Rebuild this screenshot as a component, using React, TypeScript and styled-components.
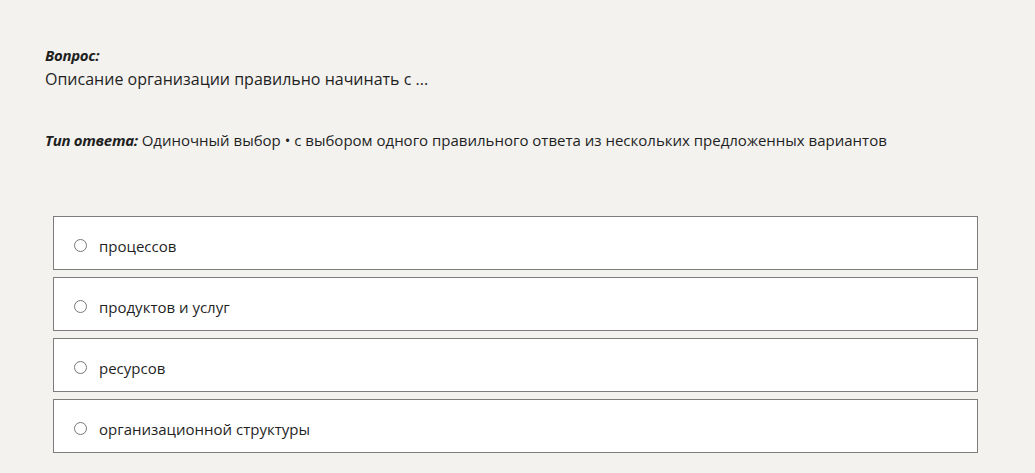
import React from "react";
import styled, { createGlobalStyle } from "styled-components";

const Global = createGlobalStyle`
  html, body { margin: 0; padding: 0; background: #f3f2ef; }
  body { font-family: "Open Sans", "Noto Sans", sans-serif; color: #1f1f1f; }
`;

const Page = styled.div`
  padding: 45px 57px 0 45px;
  display: flex;
  flex-direction: column;
`;

const Label = styled.div`
  font-weight: 700;
  font-style: italic;
  font-size: 15px;
  line-height: 20px;
  letter-spacing: -0.3px;
`;

const Question = styled.div`
  font-size: 16px;
  line-height: 21px;
  margin-top: 4px;
`;

const TypeLine = styled.div`
  margin-top: 40px;
  font-size: 15px;
  line-height: 20px;
`;

const TypeLabel = styled.span`
  font-weight: 700;
  font-style: italic;
  letter-spacing: -0.3px;
`;

const Options = styled.div`
  margin-top: 66px;
  margin-left: 8px;
  display: flex;
  flex-direction: column;
  gap: 7px;
`;

const Option = styled.label`
  display: flex;
  align-items: center;
  height: 54px;
  box-sizing: border-box;
  border: 1px solid #7d7d7d;
  background: #ffffff;
  padding: 5px 0 0 20px;
  font-size: 15px;
  cursor: pointer;
`;

const Radio = styled.span`
  width: 13px;
  height: 13px;
  box-sizing: border-box;
  border: 1px solid #777;
  border-radius: 50%;
  flex: none;
  margin-right: 12px;
`;

const options = ["процессов", "продуктов и услуг", "ресурсов", "организационной структуры"];

export default function App() {
  return (
    <>
      <Global />
      <Page>
        <Label>Вопрос:</Label>
        <Question>Описание организации правильно начинать с ...</Question>
        <TypeLine>
          <TypeLabel>Тип ответа:</TypeLabel> Одиночный выбор • с выбором одного правильного ответа из нескольких предложенных вариантов
        </TypeLine>
        <Options>
          {options.map((o) => (
            <Option key={o}>
              <Radio />
              {o}
            </Option>
          ))}
        </Options>
      </Page>
    </>
  );
}
